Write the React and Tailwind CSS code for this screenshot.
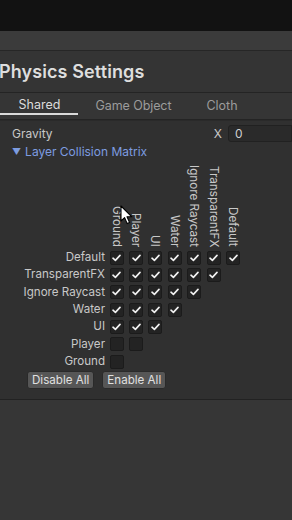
import React from 'react';

const layers = ['Default', 'TransparentFX', 'Ignore Raycast', 'Water', 'UI', 'Player', 'Ground'];
const unchecked = ['Player', 'Ground'];

const Check = () => (
    <svg width="9" height="8" viewBox="0 0 9 8" fill="none">
        <path d="M1 4.2 L3.4 6.4 L8 1.4" stroke="#f2f2f2" strokeWidth="1.6" strokeLinecap="round" strokeLinejoin="round" />
    </svg>
);

const Box = ({ on }) => (
    <div className="w-[14px] h-[14px] rounded-[2px] bg-[#232323] border border-[#1b1b1b] flex items-center justify-center">
        {on && <Check />}
    </div>
);

const Cursor = () => (
    <svg className="absolute left-[120px] top-[205px]" width="13" height="20" viewBox="0 0 13 20">
        <path d="M1 1 L1 16 L4.6 12.6 L7.2 18.6 L9.6 17.6 L7 11.8 L11.8 11.8 Z" fill="#ffffff" stroke="#000000" strokeWidth="1.1" strokeLinejoin="round" />
    </svg>
);

export default function App() {
    const headers = [...layers].reverse();

    return (
        <div className="relative w-[292px] h-[520px] overflow-hidden bg-[#363636] text-[12px] text-[#c8c8c8]" style={{ fontFamily: 'Inter, "Noto Sans", sans-serif' }}>
            {/* window chrome */}
            <div className="h-[31px] bg-[#121212]"></div>
            <div className="h-[20px] bg-[#3b3b3b] border-b border-[#262626]"></div>

            {/* title */}
            <div className="h-[42px] bg-[#343434] border-b border-[#242424] flex items-center">
                <h1 className="-ml-[1px] text-[18px] font-semibold text-[#dedede] tracking-[0.1px]">Physics Settings</h1>
            </div>

            {/* tabs */}
            <div className="h-[27px] bg-[#353535] border-b border-[#242424] flex text-[12.5px]">
                <div className="w-[78px] flex flex-col items-center justify-end">
                    <span className="text-[#dcdcdc] leading-none pb-[2px] pl-[1px]">Shared</span>
                    <div className="w-full h-[2px] bg-[#dadada] mb-[4px]"></div>
                </div>
                <div className="w-[111px] flex items-center justify-center pt-[1px] text-[#9c9c9c] tracking-[-0.1px]">Game Object</div>
                <div className="w-[66px] flex items-center justify-center pt-[1px] text-[#9c9c9c]">Cloth</div>
            </div>

            {/* content */}
            <div className="bg-[#303030] border-t border-[#2a2a2a] border-b border-b-[#222] pt-[4px] pb-[10px]">
                <div className="h-[17px] flex items-center">
                    <span className="pl-[12px] flex-1">Gravity</span>
                    <span className="mr-[6px] text-[#c8c8c8]">X</span>
                    <div className="w-[64px] h-[17px] bg-[#2a2a2a] border border-[#212121] rounded-l-[3px] flex items-center pl-[6px] text-[#d0d0d0]">0</div>
                </div>
                <div className="h-[20px] flex items-center pl-[12px] text-[#7d9ce0]">
                    <span className="text-[9px] mr-[4px]">▼</span>
                    <span>Layer Collision Matrix</span>
                </div>

                {/* matrix */}
                <div className="flex items-end h-[87px] pb-[2px] pl-[107px]">
                    {headers.map((name) => (
                        <div key={name} className="w-[19.4px] flex justify-center">
                            <span className="[writing-mode:vertical-rl] leading-[14px] text-[11.7px] text-[#c8c8c8] whitespace-nowrap">{name}</span>
                        </div>
                    ))}
                </div>
                {layers.map((name, i) => (
                    <div key={name} className="h-[17.33px] flex items-center">
                        <span className="w-[105px] text-right text-[11.6px] text-[#c8c8c8]">{name}</span>
                        <div className="flex pl-[2px]">
                            {Array.from({ length: 7 - i }).map((_, j) => (
                                <div key={j} className="w-[19.4px] flex justify-center">
                                    <Box on={!unchecked.includes(name)} />
                                </div>
                            ))}
                        </div>
                    </div>
                ))}

                <div className="flex gap-[8px] pl-[27px] mt-[1px]">
                    <button className="h-[18px] px-[4px] bg-[#565656] border border-[#2a2a2a] rounded-[3px] text-[11.6px] text-[#e0e0e0] leading-none">Disable All</button>
                    <button className="h-[18px] px-[4px] bg-[#565656] border border-[#2a2a2a] rounded-[3px] text-[11.6px] text-[#e0e0e0] leading-none">Enable All</button>
                </div>
            </div>

            <Cursor />
        </div>
    );
}
